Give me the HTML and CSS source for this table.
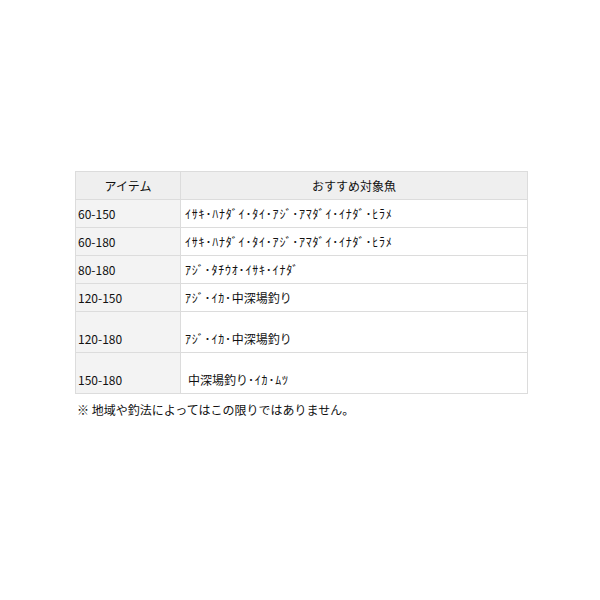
FILE: index.html
```html
<!DOCTYPE html>
<html lang="ja">
<head>
<meta charset="utf-8">
<link rel="stylesheet" href="styles.css">
</head>
<body>
<div class="wrap">
<table class="spec">
<tr><th class="c1">アイテム</th><th class="c2">おすすめ対象魚</th></tr>
<tr><td class="c1">60-150</td><td class="c2 hw">ｲｻｷ･ﾊﾅﾀﾞｲ･ﾀｲ･ｱｼﾞ･ｱﾏﾀﾞｲ･ｲﾅﾀﾞ･ﾋﾗﾒ</td></tr>
<tr><td class="c1">60-180</td><td class="c2 hw">ｲｻｷ･ﾊﾅﾀﾞｲ･ﾀｲ･ｱｼﾞ･ｱﾏﾀﾞｲ･ｲﾅﾀﾞ･ﾋﾗﾒ</td></tr>
<tr><td class="c1">80-180</td><td class="c2 hw">ｱｼﾞ･ﾀﾁｳｵ･ｲｻｷ･ｲﾅﾀﾞ</td></tr>
<tr><td class="c1">120-150</td><td class="c2"><span class="hws">ｱｼﾞ･ｲｶ･</span>中深場釣り</td></tr>
<tr class="tall"><td class="c1">120-180</td><td class="c2"><span class="hws">ｱｼﾞ･ｲｶ･</span>中深場釣り</td></tr>
<tr class="tall"><td class="c1">150-180</td><td class="c2 ind">中深場釣り<span class="hws">･ｲｶ･ﾑﾂ</span></td></tr>
</table>
<p class="note">※ 地域や釣法によってはこの限りではありません。</p>
</div>
</body>
</html>
```
FILE: styles.css
```css
html, body {
  margin: 0;
  padding: 0;
  background: #fff;
}
body {
  font-family: "Noto Sans CJK JP", "DejaVu Sans", sans-serif;
  font-size: 12px;
  color: #111;
}
.wrap {
  padding: 171px 0 0 75px;
}
.spec {
  border-collapse: collapse;
  width: 453px;
  table-layout: fixed;
}
.spec th, .spec td {
  border: 1px solid #dcdcdc;
  height: 28px;
  padding: 0 3px;
  line-height: 14px;
  box-sizing: border-box;
  font-weight: normal;
  vertical-align: middle;
}
.spec th {
  background: #efefef;
  text-align: center;
}
.spec th.c1 { width: 105px; }
.spec td.c1 {
  background: #f3f3f3;
  text-align: left;
  padding-left: 2px;
}
.spec td.c2 {
  background: #fff;
  padding-left: 4px;
}
.spec td.hw { letter-spacing: 0.8px; }
.hws { letter-spacing: 0.8px; }
.spec tr.tall td {
  height: 41px;
  padding-top: 13px;
}
.spec td.ind { padding-left: 7px; }
.note {
  margin: 9px 0 0 2px;
  line-height: 14px;
}
```
